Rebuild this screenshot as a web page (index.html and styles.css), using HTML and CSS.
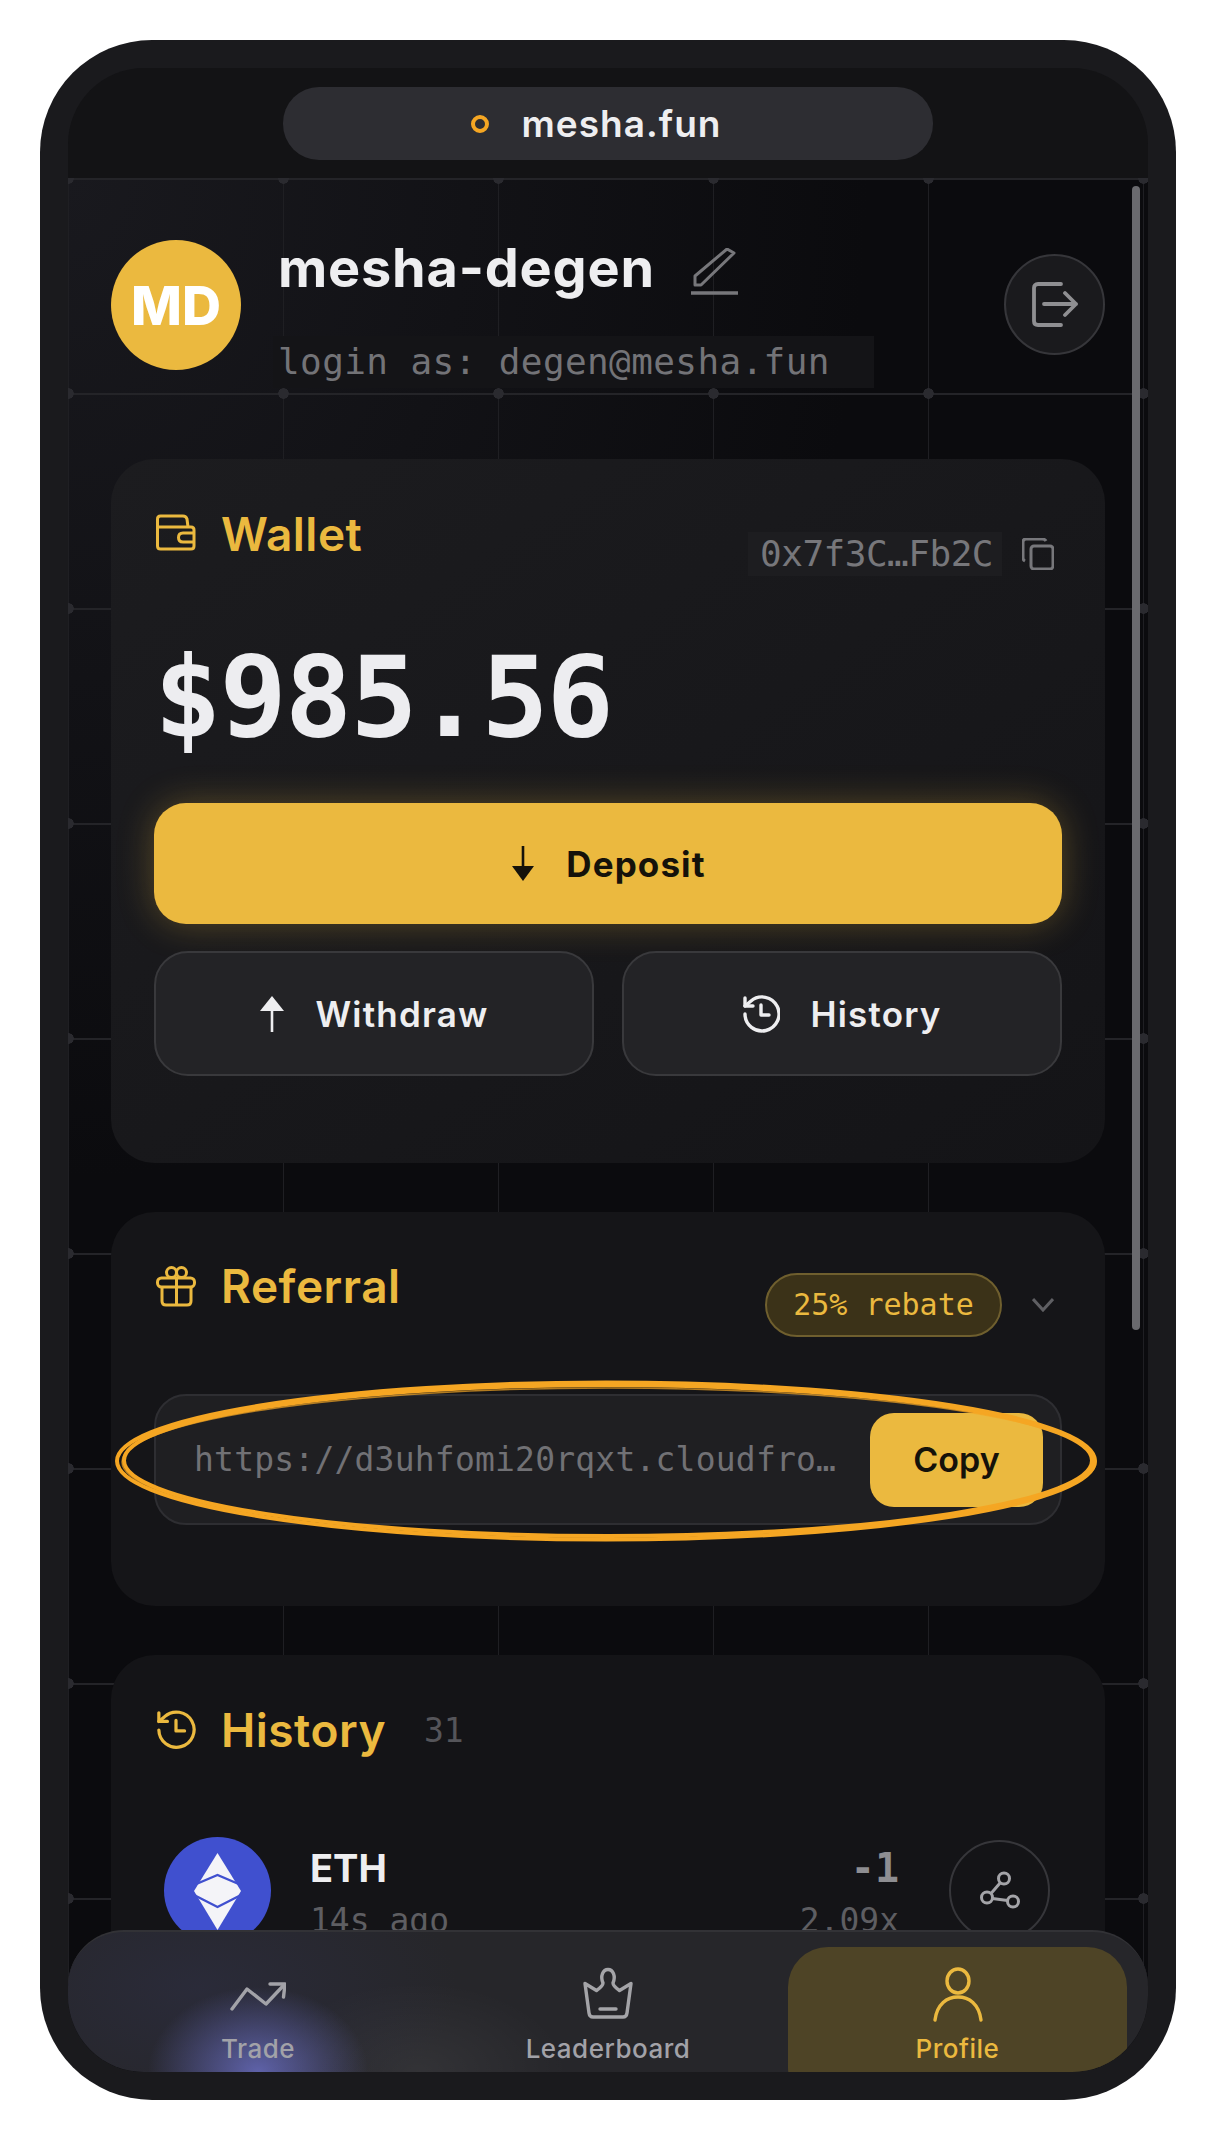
FILE: index.html
```html
<!DOCTYPE html>
<html lang="en">
<head>
    <meta charset="UTF-8">
    <meta name="viewport" content="width=device-width, initial-scale=1.0">
    <title>mesha.fun</title>
    <link rel="stylesheet" href="styles.css">
</head>
<body>
    <div class="phone">
        <div class="screen">
            <header class="topbar">
                <div class="url-pill">
                    <span class="url-dot"></span>
                    <span class="url-text">mesha.fun</span>
                </div>
            </header>

            <main class="content">
                <section class="profile">
                    <div class="avatar">MD</div>
                    <div class="profile-info">
                        <div class="name-row">
                            <h1 class="name">mesha-degen</h1>
                            <svg class="edit-icon" viewBox="0 0 48 48" fill="none" stroke="#77777b" stroke-width="3" stroke-linejoin="round">
                                <path d="M4 37 V28 L36 1 L43 5 L10 37 Z"/>
                                <path d="M0 45 H47" stroke-width="3.5"/>
                            </svg>
                        </div>
                        <div class="login-as">login as: degen@mesha.fun</div>
                    </div>
                    <button class="logout">
                        <svg viewBox="0 0 46 46" fill="none" stroke="#8f8f92" stroke-width="3.8" stroke-linecap="round" stroke-linejoin="round">
                            <path d="M29 2 H6 Q2 2 2 6 V39 Q2 43 6 43 H29"/>
                            <path d="M12 22 H44 M33 11 L44 22 L33 33"/>
                        </svg>
                    </button>
                </section>

                <section class="card wallet">
                    <div class="card-head">
                        <h2 class="card-title">
                            <svg class="title-icon" viewBox="0 0 40 40" fill="none" stroke="#ebb93f" stroke-width="3" stroke-linejoin="round">
                                <path d="M1.500 13 V5 Q1.500 2 4.500 2 H27 Q30 2 31 5 L32 13"/>
                                <path d="M1.500 13 H35 Q38 13 38 16 V32 Q38 35 35 35 H4.500 Q1.500 35 1.500 32 Z"/>
                                <path d="M38 19 H27 Q22.500 19 22.500 23.500 Q22.500 28 27 28 H38"/>
                            </svg>
                            Wallet
                        </h2>
                        <div class="address">
                            <span class="address-text">0x7f3C…Fb2C</span>
                            <svg class="copy-icon" viewBox="0 0 32 32" fill="none" stroke="#77777b" stroke-width="3">
                                <rect x="9" y="8" width="22" height="23" rx="3"/>
                                <path d="M3 23 Q1 22 1 20 V4 Q1 1 4 1 H20 Q23 1 24 3"/>
                            </svg>
                        </div>
                    </div>
                    <div class="balance">$985.56</div>
                    <button class="btn-deposit">
                        <svg class="btn-icon" viewBox="0 0 26 36">
                            <path d="M13 0 V24" stroke="#15120a" stroke-width="2.600"/>
                            <path d="M2 20 H24 L13 35 Z" fill="#15120a"/>
                        </svg>
                        Deposit
                    </button>
                    <div class="btn-row">
                        <button class="btn-dark">
                            <svg class="btn-icon" viewBox="0 0 26 36">
                                <path d="M13 36 V12" stroke="#eeeef0" stroke-width="2.600"/>
                                <path d="M1 15 H25 L13 0 Z" fill="#eeeef0"/>
                            </svg>
                            Withdraw
                        </button>
                        <button class="btn-dark">
                            <svg class="btn-history" viewBox="0 0 38 38" fill="none" stroke="#eeeef0" stroke-width="3.400" stroke-linecap="round" stroke-linejoin="round">
                                <path d="M3 19 A17 17 0 1 0 9 6 L3 11"/>
                                <path d="M3 3 V11 H11"/>
                                <path d="M19 10 V20 H27"/>
                            </svg>
                            History
                        </button>
                    </div>
                </section>

                <section class="card referral">
                    <div class="card-head">
                        <h2 class="card-title">
                            <svg class="title-icon gift" viewBox="0 0 40 42" fill="none" stroke="#ebb93f" stroke-width="3" stroke-linejoin="round">
                                <rect x="1.500" y="13" width="37" height="9" rx="4"/>
                                <path d="M6 22 V36 Q6 40 10 40 H31 Q35 40 35 36 V22"/>
                                <path d="M20.500 13 V40"/>
                                <circle cx="15.500" cy="7.500" r="5"/>
                                <circle cx="25.500" cy="7.500" r="5"/>
                            </svg>
                            Referral
                        </h2>
                        <div class="rebate-wrap">
                            <span class="rebate">25% rebate</span>
                            <svg class="chevron" viewBox="0 0 22 14" fill="none" stroke="#5f5f63" stroke-width="3">
                                <path d="M1 1 L11 12 L21 1"/>
                            </svg>
                        </div>
                    </div>
                    <div class="link-field">
                        <span class="link-text">https://d3uhfomi20rqxt.cloudfro…</span>
                        <button class="btn-copy">Copy</button>
                        <svg class="scribble" viewBox="0 0 985 162" fill="none" stroke="#f5a623">
                            <ellipse cx="491" cy="81" rx="489" ry="78.500" stroke-width="4"/>
                            <ellipse cx="493" cy="80.500" rx="484" ry="75.500" stroke-width="4"/>
                            <ellipse cx="494" cy="82" rx="487" ry="74" stroke-width="1.500" stroke-opacity=".7"/>
                        </svg>
                    </div>
                </section>

                <section class="card trades">
                    <h2 class="card-title">
                        <svg class="title-icon" viewBox="0 0 42 42" fill="none" stroke="#ebb93f" stroke-width="3.400" stroke-linecap="round" stroke-linejoin="round">
                            <path d="M3 21 A18.500 18.500 0 1 0 9 7 L3 12"/>
                            <path d="M3 3 V12 H12"/>
                            <path d="M21 11 V22 H30"/>
                        </svg>
                        History
                        <span class="count">31</span>
                    </h2>
                    <div class="trade-row">
                        <svg class="coin" viewBox="0 0 107 107">
                            <circle cx="53.500" cy="53.500" r="53.500" fill="#4050cf"/>
                            <path d="M53.500 16 L77 54 L53.500 93 L30 54 Z" fill="#f4f4f8"/>
                            <path d="M30 48 L53.500 38 L77 48 M30 58 L53.500 70 L77 58" fill="none" stroke="#4050cf" stroke-width="2.400"/>
                        </svg>
                        <div class="trade-info">
                            <div class="trade-coin">ETH</div>
                            <div class="trade-time">14s ago</div>
                        </div>
                        <div class="trade-result">
                            <div class="trade-amount">-1</div>
                            <div class="trade-mult">2.09x</div>
                        </div>
                        <button class="share">
                            <svg viewBox="0 0 44 44" fill="none" stroke="#a4a4a8" stroke-width="3">
                                <circle cx="26" cy="9.500" r="5.500"/>
                                <circle cx="9" cy="28.500" r="5.500"/>
                                <circle cx="35" cy="32.500" r="5.500"/>
                                <path d="M22.500 13.500 L13 24.500 M14.500 29.500 L29.500 31.500"/>
                            </svg>
                        </button>
                    </div>
                </section>

                <div class="scrollbar"></div>
            </main>

            <nav class="bottom-nav">
                <a class="nav-item trade-item">
                    <svg viewBox="0 0 56 56" fill="none" stroke="#a2a2a8" stroke-width="3.400" stroke-linecap="round" stroke-linejoin="round">
                        <path d="M2 42 L17 22 L36 37 L53 19"/>
                        <path d="M40 17 H55 L53.500 30"/>
                    </svg>
                    <span>Trade</span>
                </a>
                <a class="nav-item board-item">
                    <svg viewBox="0 0 56 56" fill="none" stroke="#a4a4a8" stroke-width="3.400" stroke-linecap="round" stroke-linejoin="round">
                        <path d="M5 16.500 L16.500 23.500 Q23 19 23 16 C20 9 23 2.500 28 2.500 C33 2.500 36 9 33 16 Q33 19 39.500 23.500 L51 16.500 L47 46 Q46.500 50 43 50 H13 Q9.500 50 9 46 Z"/>
                        <path d="M20 42 H36"/>
                    </svg>
                    <span>Leaderboard</span>
                </a>
                <a class="nav-item active">
                    <svg viewBox="0 0 56 56" fill="none" stroke="#ebb93f" stroke-width="3.400" stroke-linecap="round">
                        <ellipse cx="28" cy="14" rx="11" ry="12"/>
                        <path d="M5 53 C7 37 17 30 28 30 C39 30 49 37 51 53"/>
                    </svg>
                    <span>Profile</span>
                </a>
            </nav>
        </div>
    </div>
</body>
</html>
```

FILE: styles.css
```css
* {
    box-sizing: border-box;
}

body {
    margin: 0;
    background-color: #fff;
    font-family: Inter, "Liberation Sans", sans-serif;
    color: #eeeef0;
}

h1, h2 {
    margin: 0;
}

button {
    font-family: inherit;
    cursor: pointer;
}

.phone {
    width: 1136px;
    height: 2060px;
    margin: 40px;
    padding: 28px;
    background-color: #1a1a1d;
    border-radius: 112px;
}

.screen {
    position: relative;
    display: flex;
    flex-direction: column;
    height: 100%;
    overflow: hidden;
    border-radius: 76px;
    background-color: #131315;
}

/* url bar */
.topbar {
    flex: 0 0 110px;
    display: flex;
    justify-content: center;
    padding-top: 19px;
}

.url-pill {
    width: 650px;
    height: 73px;
    padding-right: 24px;
    display: flex;
    align-items: center;
    justify-content: center;
    gap: 33px;
    background-color: #2d2d32;
    border-radius: 36px;
}

.url-dot {
    width: 18px;
    height: 18px;
    border: 4px solid #f5a623;
    border-radius: 50%;
}

.url-text {
    font-size: 37px;
    font-weight: 600;
    letter-spacing: 1px;
}

/* scroll area with the grid behind it */
.content {
    position: relative;
    flex: 1;
    overflow: hidden;
    padding: 58px 43px 0;
    background-color: #0b0b0e;
    background-image:
        radial-gradient(circle, #2a2a2f 5px, transparent 5.500px),
        linear-gradient(to right, #1f1f23 1px, transparent 1px),
        linear-gradient(to bottom, #242428 2px, transparent 2px),
        radial-gradient(ellipse 800px 1000px at 0 0, #19191e, transparent);
    background-size: 215px 215px, 215px 215px, 215px 215px, 100% 100%;
    background-position: -107px -107px, 0 0, 0 0, 0 0;
}

.scrollbar {
    position: absolute;
    top: 8px;
    right: 8px;
    width: 8px;
    height: 1144px;
    background-color: #6a6a6e;
    border-radius: 4px;
}

/* profile */
.profile {
    display: flex;
    align-items: flex-start;
    gap: 37px;
}

.avatar {
    width: 130px;
    height: 130px;
    margin-top: 4px;
    display: flex;
    align-items: center;
    justify-content: center;
    background-color: #ebb93f;
    border-radius: 50%;
    font-size: 54px;
    font-weight: 800;
    color: #fff;
}

.profile-info {
    flex: 1;
}

.name-row {
    display: flex;
    align-items: center;
    gap: 36px;
    height: 64px;
}

.name {
    font-size: 54px;
    font-weight: 700;
    letter-spacing: 0.8px;
    line-height: 64px;
}

.edit-icon {
    width: 48px;
    height: 48px;
    margin-top: 8px;
}

.login-as {
    display: inline-block;
    margin: 36px 0 0 -5px;
    padding: 0 44px 0 5px;
    height: 52px;
    background-color: #141417;
    font-family: "DejaVu Sans Mono", monospace;
    font-size: 36px;
    letter-spacing: 0.4px;
    line-height: 52px;
    color: #737377;
}

.logout {
    width: 101px;
    height: 101px;
    margin-top: 18px;
    padding: 0;
    display: flex;
    align-items: center;
    justify-content: center;
    background-color: #1a1a1d;
    border: 2px solid #36363a;
    border-radius: 50%;
}

.logout svg {
    width: 46px;
    height: 46px;
}

/* cards */
.card {
    background: linear-gradient(to bottom right, #1c1c1f, #141417);
    border-radius: 44px;
}

.wallet {
    margin-top: 71px;
    padding: 47px 43px 87px;
}

.referral {
    margin-top: 49px;
    padding: 46px 43px 81px;
    background: #151518;
}

.trades {
    margin-top: 49px;
    padding: 47px 43px 200px;
    background: #141417;
}

.card-head {
    display: flex;
    justify-content: space-between;
    align-items: flex-start;
}

.card-title {
    display: flex;
    align-items: center;
    height: 56px;
    font-size: 46px;
    font-weight: 600;
    letter-spacing: 0.5px;
    color: #ebb93f;
}

.title-icon {
    width: 40px;
    height: 40px;
    margin: 0 25px 0 2px;
}

.gift {
    height: 42px;
}

/* wallet */
.address {
    display: flex;
    align-items: center;
    gap: 20px;
    margin-top: 26px;
}

.address-text {
    padding: 0 9px 0 12px;
    height: 44px;
    background-color: #1d1d20;
    font-family: "DejaVu Sans Mono", monospace;
    font-size: 36px;
    letter-spacing: -0.5px;
    line-height: 44px;
    color: #77777b;
}

.copy-icon {
    width: 32px;
    height: 32px;
    margin-right: 8px;
}

.balance {
    margin-top: 56px;
    font-family: "DejaVu Sans Mono", monospace;
    font-size: 112px;
    font-weight: 700;
    letter-spacing: -2px;
    line-height: 130px;
    color: #ededf0;
}

.btn-deposit {
    width: 100%;
    height: 121px;
    margin-top: 41px;
    display: flex;
    align-items: center;
    justify-content: center;
    gap: 30px;
    background-color: #ebb93f;
    border: none;
    border-radius: 32px;
    box-shadow: 0 0 36px rgba(235, 185, 63, 0.3);
    font-size: 35px;
    font-weight: 700;
    letter-spacing: 1.100px;
    color: #15120a;
}

.btn-icon {
    width: 26px;
    height: 36px;
}

.btn-history {
    width: 38px;
    height: 38px;
}

.btn-row {
    display: flex;
    gap: 28px;
    margin-top: 27px;
}

.btn-dark {
    flex: 1;
    height: 125px;
    display: flex;
    align-items: center;
    justify-content: center;
    gap: 30px;
    background-color: #232326;
    border: 2px solid #39393c;
    border-radius: 34px;
    font-size: 35px;
    font-weight: 600;
    letter-spacing: 1.200px;
    color: #eeeef0;
}

/* referral */
.rebate-wrap {
    display: flex;
    align-items: center;
    gap: 30px;
    margin-top: 15px;
}

.rebate {
    width: 237px;
    height: 64px;
    background-color: #3b3218;
    border: 2px solid #6f5f2e;
    border-radius: 32px;
    text-align: center;
    font-family: "DejaVu Sans Mono", monospace;
    font-size: 30px;
    line-height: 60px;
    color: #ebb93f;
}

.chevron {
    width: 22px;
    height: 14px;
    margin-right: 8px;
}

.link-field {
    position: relative;
    height: 131px;
    padding: 0 17px 0 38px;
    margin-top: 57px;
    display: flex;
    align-items: center;
    justify-content: space-between;
    background-color: #1f1f22;
    border: 2px solid #2e2e32;
    border-radius: 32px;
}

.link-text {
    white-space: nowrap;
    font-family: "DejaVu Sans Mono", monospace;
    font-size: 33px;
    letter-spacing: 0.2px;
    color: #717175;
}

.btn-copy {
    flex: 0 0 173px;
    height: 94px;
    background-color: #ebb93f;
    border: none;
    border-radius: 24px;
    font-size: 34px;
    font-weight: 600;
    color: #15120a;
}

.scribble {
    position: absolute;
    left: -41px;
    top: -16px;
    width: 985px;
    height: 162px;
}

/* history */
.count {
    margin-left: 38px;
    font-family: "DejaVu Sans Mono", monospace;
    font-size: 33px;
    font-weight: 400;
    letter-spacing: 0;
    color: #55555a;
}

.trade-row {
    display: flex;
    align-items: flex-start;
    margin: 79px 0 0 10px;
}

.coin {
    width: 107px;
    height: 107px;
}

.trade-info {
    flex: 1;
    margin-left: 39px;
}

.trade-coin {
    margin-top: 8px;
    font-size: 38px;
    font-weight: 700;
    line-height: 46px;
}

.trade-time,
.trade-mult {
    margin-top: 8px;
    font-family: "DejaVu Sans Mono", monospace;
    font-size: 33px;
    line-height: 44px;
    color: #5e5e62;
}

.trade-result {
    text-align: right;
}

.trade-amount {
    margin-top: 8px;
    font-family: "DejaVu Sans Mono", monospace;
    font-size: 40px;
    font-weight: 700;
    line-height: 46px;
    color: #8e8e92;
}

.share {
    width: 101px;
    height: 101px;
    margin: 3px 12px 0 50px;
    padding: 0;
    display: flex;
    align-items: center;
    justify-content: center;
    background: none;
    border: 2px solid #36363a;
    border-radius: 50%;
}

.share svg {
    width: 44px;
    height: 44px;
}

/* bottom nav, sits over the scroll area */
.bottom-nav {
    position: absolute;
    left: 0;
    right: 0;
    bottom: 0;
    height: 142px;
    display: flex;
    padding: 15px 21px 0 0;
    background-color: #26262a;
    background-image:
        radial-gradient(ellipse 110px 85px at 190px 100%, rgba(104, 108, 190, 0.85), transparent),
        radial-gradient(ellipse 260px 140px at 130px 40%, rgba(52, 54, 92, 0.3), transparent),
        radial-gradient(ellipse 150px 90px at 350px 100%, rgba(255, 255, 255, 0.06), transparent);
    border-top: 2px solid #323236;
    border-radius: 56px 56px 0 0;
}

.nav-item {
    display: flex;
    flex-direction: column;
    align-items: center;
    padding-top: 20px;
    font-size: 26px;
    font-weight: 500;
    letter-spacing: 0.5px;
    color: #a2a2a8;
}

.trade-item {
    flex: 0 0 380px;
}

.board-item {
    flex: 0 0 320px;
}

.nav-item svg {
    width: 56px;
    height: 56px;
}

.nav-item span {
    margin-top: 10px;
}

.active {
    flex: 0 0 339px;
    height: 160px;
    margin-left: 20px;
    background-color: #4e4426;
    border-radius: 40px;
    color: #ebb93f;
}
```
